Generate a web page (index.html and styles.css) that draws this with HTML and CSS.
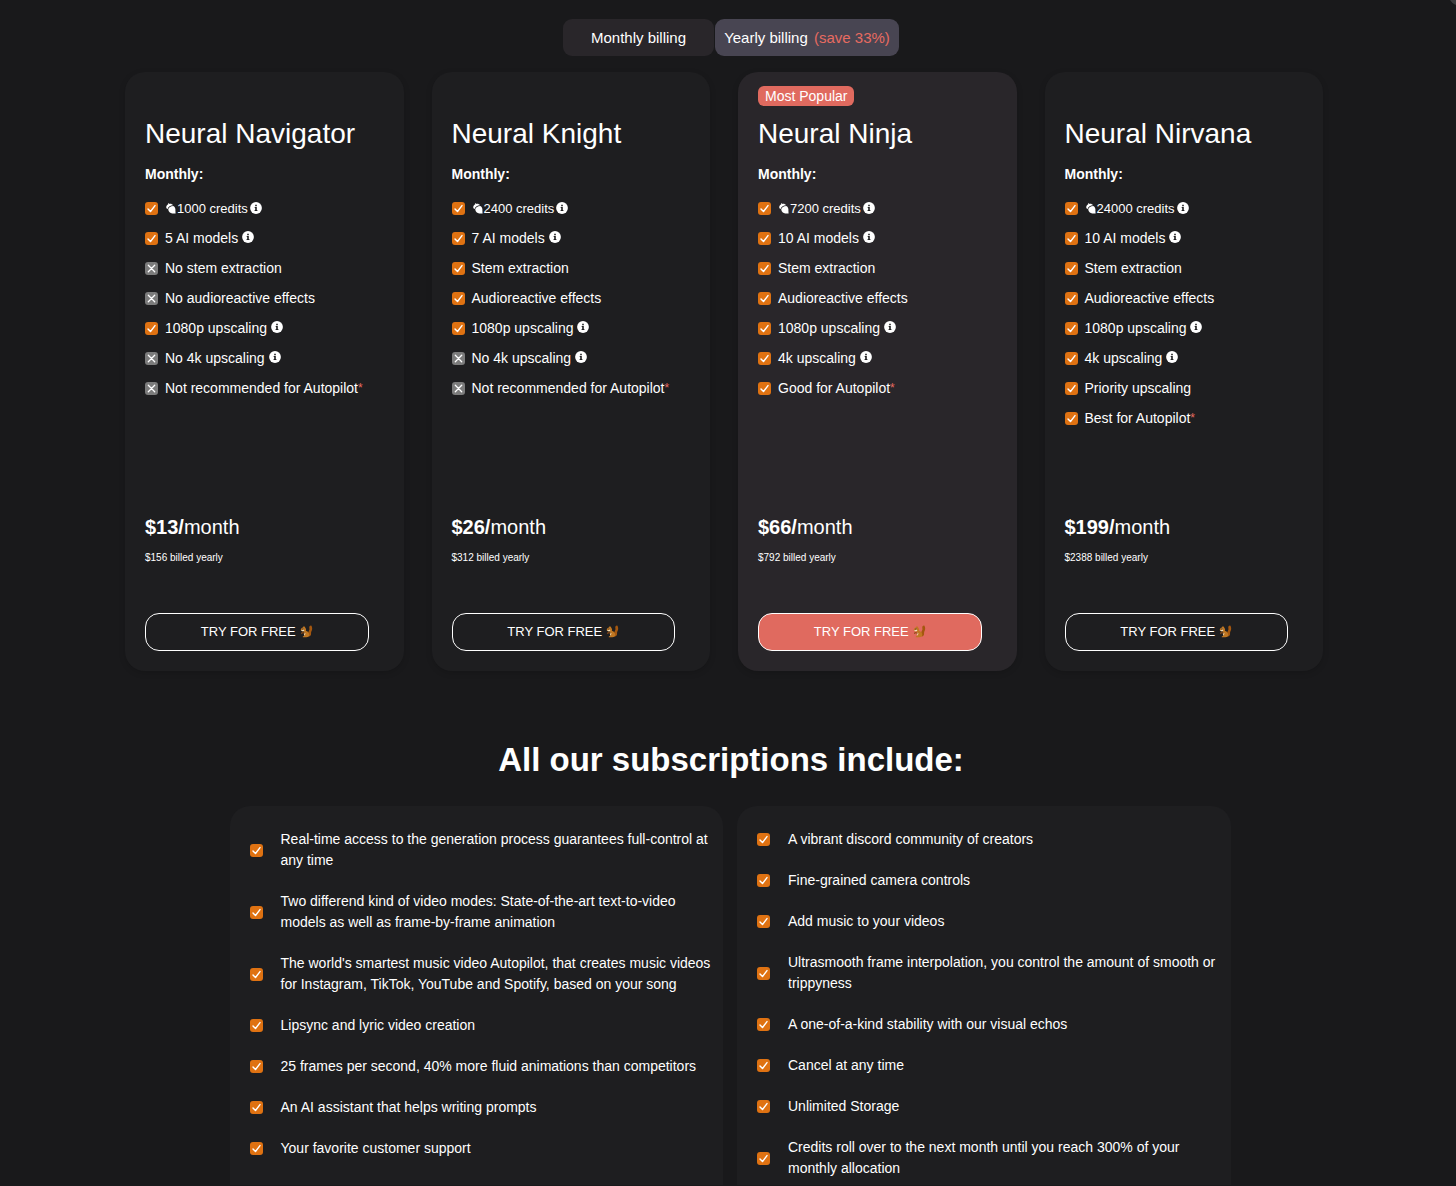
FILE: index.html
```html
<!DOCTYPE html>
<html lang="en">
<head>
<meta charset="utf-8">
<meta name="viewport" content="width=device-width, initial-scale=1">
<title>Pricing</title>
<link rel="stylesheet" href="styles.css">
</head>
<body>
<svg class="sprite" aria-hidden="true">
  <symbol id="yes" viewBox="0 0 13 13"><rect width="13" height="13" rx="3" fill="#df7212"/><path d="M3 6.9l2.500 2.600L10 3.600" fill="none" stroke="#fff" stroke-width="1.400" stroke-linecap="round" stroke-linejoin="round"/></symbol>
  <symbol id="no" viewBox="0 0 13 13"><rect width="13" height="13" rx="3" fill="#7c7c7c"/><path d="M3.300 3.300l6.400 6.400M9.700 3.300L3.300 9.700" fill="none" stroke="#fff" stroke-width="1.300" stroke-linecap="round"/></symbol>
  <symbol id="info" viewBox="0 0 12 12"><circle cx="6" cy="6" r="5.900" fill="#fff"/><path d="M5.200 2.700h1.600v1.500H5.200zM4.700 5h2.100v3h.6v1H4.600V8h.6V6h-.5z" fill="#1e1e20"/></symbol>
  <symbol id="acorn" viewBox="0 0 10 11"><path d="M.4 5.200C-.1 3.300.8 1.800 2.300 1.200L2 .6l.9-.4.4.7C4.700.500 6.300 1 7 2.300 4.500 2.300 2.300 3.600 1.700 5.900z" fill="#fff"/><path d="M2.200 6.300C2.700 4.400 4.700 3 7.300 3c1.700.9 2.400 2.700 2.100 4.600l.2 2.900-2.800-.1C4.500 10.700 2.500 9 2.200 6.300z" fill="#fff"/></symbol>
  <symbol id="squirrel" viewBox="0 0 14 14"><path d="M9.300 12.500C13.500 11.500 11 8.500 12.500 6.500c.9-1.400.9-4.500-.4-5.900-1.500-.2-2.500 1.300-2 3 .6 2-1.300 3.300-1.300 5z" fill="#a4570f"/><path d="M3 13.200c-.2-1 .9-1.400 1.700-1.500-.8-1.500-.5-2.900.1-3.900L3.300 6.700C1.800 6.800.7 6.200.8 5.100 1 3.700 2 3.200 3.100 2.700L3.400 1.300l1 .9.900-.9.300 1.700c1.100 1 1.100 2.200.8 3.200 2.600.9 4 3 3.500 5.300-.4 1.700-2.900 1.800-6.900 1.700z" fill="#c07722"/><path d="M1 5.500c1 .3 2.300 0 3-.8l.7 1.600c-.8.9-2.900.7-3.700-.8zM4.900 8.200l1 .9-.9 2.500c-.6-1-.7-2.300-.1-3.400zM2 3.500l2-.4-.6.800z" fill="#f0e0bd"/><path d="M1 8.300l2.200-.7L5 8.500l-.4.900-1.600-.4-1.700.7z" fill="#8f4a12"/><circle cx="3.200" cy="4.200" r=".6" fill="#26150b"/></symbol>
</svg>
<span class="corner"></span>
<main>
  <div class="billing">
    <button type="button">Monthly billing</button>
    <button type="button" class="active">Yearly billing <span class="save">(save 33%)</span></button>
  </div>

  <section class="plans">
    <article class="plan">
      <div class="tag-row"></div>
      <h2>Neural Navigator</h2>
      <h3>Monthly:</h3>
      <ul class="features">
        <li><svg class="mark"><use href="#yes"/></svg><span class="credits"><svg class="acorn"><use href="#acorn"/></svg>1000 credits</span><svg class="info tight"><use href="#info"/></svg></li>
        <li><svg class="mark"><use href="#yes"/></svg>5 AI models<svg class="info"><use href="#info"/></svg></li>
        <li><svg class="mark"><use href="#no"/></svg>No stem extraction</li>
        <li><svg class="mark"><use href="#no"/></svg>No audioreactive effects</li>
        <li><svg class="mark"><use href="#yes"/></svg>1080p upscaling<svg class="info"><use href="#info"/></svg></li>
        <li><svg class="mark"><use href="#no"/></svg>No 4k upscaling<svg class="info"><use href="#info"/></svg></li>
        <li><svg class="mark"><use href="#no"/></svg>Not recommended for Autopilot<span class="star">*</span></li>
      </ul>
      <p class="price"><strong>$13/</strong>month</p>
      <p class="billed">$156 billed yearly</p>
      <button type="button" class="try">TRY FOR FREE <svg><use href="#squirrel"/></svg></button>
    </article>

    <article class="plan">
      <div class="tag-row"></div>
      <h2>Neural Knight</h2>
      <h3>Monthly:</h3>
      <ul class="features">
        <li><svg class="mark"><use href="#yes"/></svg><span class="credits"><svg class="acorn"><use href="#acorn"/></svg>2400 credits</span><svg class="info tight"><use href="#info"/></svg></li>
        <li><svg class="mark"><use href="#yes"/></svg>7 AI models<svg class="info"><use href="#info"/></svg></li>
        <li><svg class="mark"><use href="#yes"/></svg>Stem extraction</li>
        <li><svg class="mark"><use href="#yes"/></svg>Audioreactive effects</li>
        <li><svg class="mark"><use href="#yes"/></svg>1080p upscaling<svg class="info"><use href="#info"/></svg></li>
        <li><svg class="mark"><use href="#no"/></svg>No 4k upscaling<svg class="info"><use href="#info"/></svg></li>
        <li><svg class="mark"><use href="#no"/></svg>Not recommended for Autopilot<span class="star">*</span></li>
      </ul>
      <p class="price"><strong>$26/</strong>month</p>
      <p class="billed">$312 billed yearly</p>
      <button type="button" class="try">TRY FOR FREE <svg><use href="#squirrel"/></svg></button>
    </article>

    <article class="plan popular">
      <div class="tag-row"><span class="tag">Most Popular</span></div>
      <h2>Neural Ninja</h2>
      <h3>Monthly:</h3>
      <ul class="features">
        <li><svg class="mark"><use href="#yes"/></svg><span class="credits"><svg class="acorn"><use href="#acorn"/></svg>7200 credits</span><svg class="info tight"><use href="#info"/></svg></li>
        <li><svg class="mark"><use href="#yes"/></svg>10 AI models<svg class="info"><use href="#info"/></svg></li>
        <li><svg class="mark"><use href="#yes"/></svg>Stem extraction</li>
        <li><svg class="mark"><use href="#yes"/></svg>Audioreactive effects</li>
        <li><svg class="mark"><use href="#yes"/></svg>1080p upscaling<svg class="info"><use href="#info"/></svg></li>
        <li><svg class="mark"><use href="#yes"/></svg>4k upscaling<svg class="info"><use href="#info"/></svg></li>
        <li><svg class="mark"><use href="#yes"/></svg>Good for Autopilot<span class="star">*</span></li>
      </ul>
      <p class="price"><strong>$66/</strong>month</p>
      <p class="billed">$792 billed yearly</p>
      <button type="button" class="try">TRY FOR FREE <svg><use href="#squirrel"/></svg></button>
    </article>

    <article class="plan">
      <div class="tag-row"></div>
      <h2>Neural Nirvana</h2>
      <h3>Monthly:</h3>
      <ul class="features">
        <li><svg class="mark"><use href="#yes"/></svg><span class="credits"><svg class="acorn"><use href="#acorn"/></svg>24000 credits</span><svg class="info tight"><use href="#info"/></svg></li>
        <li><svg class="mark"><use href="#yes"/></svg>10 AI models<svg class="info"><use href="#info"/></svg></li>
        <li><svg class="mark"><use href="#yes"/></svg>Stem extraction</li>
        <li><svg class="mark"><use href="#yes"/></svg>Audioreactive effects</li>
        <li><svg class="mark"><use href="#yes"/></svg>1080p upscaling<svg class="info"><use href="#info"/></svg></li>
        <li><svg class="mark"><use href="#yes"/></svg>4k upscaling<svg class="info"><use href="#info"/></svg></li>
        <li><svg class="mark"><use href="#yes"/></svg>Priority upscaling</li>
        <li><svg class="mark"><use href="#yes"/></svg>Best for Autopilot<span class="star">*</span></li>
      </ul>
      <p class="price"><strong>$199/</strong>month</p>
      <p class="billed">$2388 billed yearly</p>
      <button type="button" class="try">TRY FOR FREE <svg><use href="#squirrel"/></svg></button>
    </article>
  </section>

  <h1>All our subscriptions include:</h1>
  <section class="includes">
    <ul>
      <li><svg class="mark"><use href="#yes"/></svg><span>Real-time access to the generation process guarantees full-control at any time</span></li>
      <li><svg class="mark"><use href="#yes"/></svg><span>Two differend kind of video modes: State-of-the-art text-to-video models as well as frame-by-frame animation</span></li>
      <li><svg class="mark"><use href="#yes"/></svg><span>The world's smartest music video Autopilot, that creates music videos for Instagram, TikTok, YouTube and Spotify, based on your song</span></li>
      <li><svg class="mark"><use href="#yes"/></svg><span>Lipsync and lyric video creation</span></li>
      <li><svg class="mark"><use href="#yes"/></svg><span>25 frames per second, 40% more fluid animations than competitors</span></li>
      <li><svg class="mark"><use href="#yes"/></svg><span>An AI assistant that helps writing prompts</span></li>
      <li><svg class="mark"><use href="#yes"/></svg><span>Your favorite customer support</span></li>
    </ul>
    <ul>
      <li><svg class="mark"><use href="#yes"/></svg><span>A vibrant discord community of creators</span></li>
      <li><svg class="mark"><use href="#yes"/></svg><span>Fine-grained camera controls</span></li>
      <li><svg class="mark"><use href="#yes"/></svg><span>Add music to your videos</span></li>
      <li><svg class="mark"><use href="#yes"/></svg><span>Ultrasmooth frame interpolation, you control the amount of smooth or trippyness</span></li>
      <li><svg class="mark"><use href="#yes"/></svg><span>A one-of-a-kind stability with our visual echos</span></li>
      <li><svg class="mark"><use href="#yes"/></svg><span>Cancel at any time</span></li>
      <li><svg class="mark"><use href="#yes"/></svg><span>Unlimited Storage</span></li>
      <li><svg class="mark"><use href="#yes"/></svg><span>Credits roll over to the next month until you reach 300% of your monthly allocation</span></li>
    </ul>
  </section>
</main>
</body>
</html>
```
FILE: styles.css
```css
* { box-sizing: border-box; }
body {
  margin: 0;
  background: #19191b;
  color: #fff;
  font: 14px/21px "Liberation Sans", Arial, Helvetica, sans-serif;
}
h1, h2, h3, p, ul { margin: 0; padding: 0; }
ul { list-style: none; }
button { font: inherit; color: inherit; cursor: pointer; }
.sprite { display: none; }
.corner {
  position: fixed;
  top: -20px;
  right: -18px;
  width: 26px;
  height: 26px;
  border-radius: 50%;
  background: #3c3c3e;
}

/* Billing period switch */
.billing {
  display: flex;
  justify-content: center;
  gap: 1px;
  padding: 19px 0 16px 6px;
}
.billing button {
  min-width: 151px;
  height: 37px;
  padding: 0 7px;
  border: 0;
  border-radius: 9px;
  background: #29262a;
  font-size: 15px;
  white-space: nowrap;
}
.billing .active { min-width: 184px; background: #484552; }
.save { margin-left: 2px; color: #e76b61; }

/* Plans */
.plans {
  display: grid;
  grid-template-columns: repeat(4, 1fr);
  gap: 28px;
  max-width: 1214px;
  margin: 0 auto;
  padding: 0 12px 0 4px;
}
.plan {
  display: flex;
  flex-direction: column;
  min-height: 599px;
  padding: 14px 35px 20px 20px;
  border-radius: 20px;
  background: #1e1e20;
  box-shadow: 0 2px 6px #00000026;
}
.popular { background: #29262a; }
.tag-row { display: flex; height: 20px; }
.tag {
  padding: 0 7px;
  border-radius: 6px;
  background: #e06a5f;
  line-height: 20px;
}
.plan h2 {
  margin-top: 10px;
  font-size: 28px;
  line-height: 36px;
  font-weight: 400;
  white-space: nowrap;
}
.plan h3 { margin-top: 12px; font-size: 14px; }
.features {
  display: grid;
  gap: 9px;
  margin-top: 13px;
  white-space: nowrap;
}
.features li { display: flex; align-items: center; }
.mark { flex: none; width: 13px; height: 13px; }
.features .mark { margin-right: 7px; }
.credits { display: flex; align-items: center; font-size: 13px; }
.acorn { width: 10px; height: 11px; margin: 0 1px 0 1px; }
.info { width: 12px; height: 12px; margin: 0 0 3px 4px; }
.info.tight { margin: 0 0 1px 2px; }
.star { color: #e76b61; font-size: 12px; }
.price { margin-top: auto; font-size: 20px; line-height: 28px; }
.billed { margin: 6px 0 45px; font-size: 10px; }
.try {
  display: flex;
  align-items: center;
  justify-content: center;
  gap: 4px;
  height: 38px;
  padding-bottom: 2px;
  border: 1px solid #fff;
  border-radius: 14px;
  background: transparent;
  font-size: 13px;
}
.try svg { width: 13px; height: 13px; }
.popular .try { background: #e06a5f; }

/* Shared features */
h1 {
  padding: 64px 0 22px 6px;
  font-size: 33px;
  line-height: 49px;
  text-align: center;
}
.includes {
  display: grid;
  grid-template-columns: 1fr 1fr;
  gap: 14px;
  max-width: 1013px;
  margin: 0 auto;
  padding-left: 8px;
  padding-right: 4px;
}
.includes ul {
  display: flex;
  flex-direction: column;
  gap: 20px;
  padding: 23px 8px 6px 20px;
  border-radius: 20px 20px 0 0;
  background: #1e1e20;
}
.includes li { display: flex; align-items: center; gap: 18px; }
```
